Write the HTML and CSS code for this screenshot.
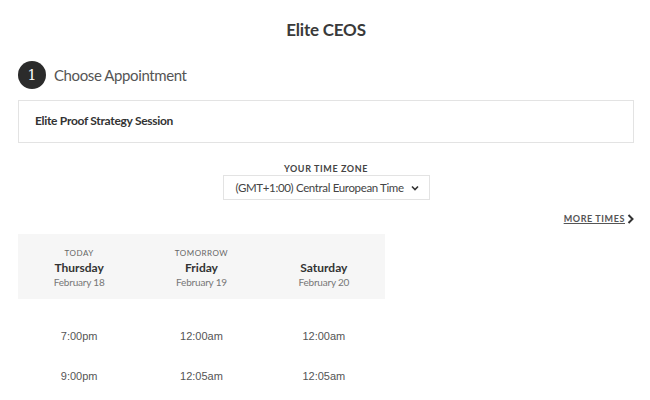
FILE: index.html
```html
<!DOCTYPE html>
<html lang="en">
<head>
    <meta charset="UTF-8">
    <meta name="viewport" content="width=device-width, initial-scale=1.0">
    <title>Elite CEOS</title>
    <link rel="stylesheet" href="styles.css">
</head>
<body>
    <header>
        <h1>Elite CEOS</h1>
    </header>
    <div class="step">
        <span class="step-number">1</span>
        <span class="step-title">Choose Appointment</span>
    </div>
    <div class="appointment-box">
        <p>Elite Proof Strategy Session</p>
    </div>
    <div class="timezone">
        <label for="timezoneSelect">YOUR TIME ZONE</label>
        <div class="select-wrap">
            <span class="select-text">(GMT+1:00) Central European Time</span>
            <svg class="chevron" width="8" height="6" viewBox="0 0 8 6"><path d="M1 1.5 L4 4.5 L7 1.5" fill="none" stroke="#333" stroke-width="1.6"/></svg>
        </div>
    </div>
    <div class="more-times">
        <a href="#">MORE TIMES</a>
        <svg width="7" height="10" viewBox="0 0 7 10"><path d="M1.5 1 L5.5 5 L1.5 9" fill="none" stroke="#333" stroke-width="2"/></svg>
    </div>
    <div class="calendar">
        <div class="day-header">
            <div class="day">
                <span class="day-label">TODAY</span>
                <span class="day-name">Thursday</span>
                <span class="day-date">February 18</span>
            </div>
            <div class="day">
                <span class="day-label">TOMORROW</span>
                <span class="day-name">Friday</span>
                <span class="day-date">February 19</span>
            </div>
            <div class="day">
                <span class="day-label">&nbsp;</span>
                <span class="day-name">Saturday</span>
                <span class="day-date">February 20</span>
            </div>
        </div>
        <div class="time-grid">
            <a href="#">7:00pm</a>
            <a href="#">12:00am</a>
            <a href="#">12:00am</a>
            <a href="#">9:00pm</a>
            <a href="#">12:05am</a>
            <a href="#">12:05am</a>
        </div>
    </div>
</body>
</html>
```

FILE: styles.css
```css
* {
    margin: 0;
    padding: 0;
    box-sizing: border-box;
}
body {
    font-family: Lato, "Open Sans", sans-serif;
    background: white;
    color: #333;
    padding: 0 16px 0 18px;
}
header {
    text-align: center;
    padding-top: 19px;
    height: 60px;
}
h1 {
    font-size: 17px;
    font-weight: 700;
    letter-spacing: -0.2px;
    color: #3a3a3a;
}
.step {
    display: flex;
    align-items: center;
    gap: 8px;
    height: 30px;
}
.step-number {
    width: 28px;
    height: 28px;
    border-radius: 50%;
    background: #2b2b2b;
    color: white;
    font-family: "DejaVu Serif", "Liberation Serif", serif;
    font-size: 14px;
    display: flex;
    align-items: center;
    justify-content: center;
}
.step-title {
    font-size: 15px;
    letter-spacing: -0.4px;
    color: #555;
}
.appointment-box {
    margin-top: 10px;
    border: 1px solid #e3e3e3;
    height: 43px;
    padding: 0 16px;
    display: flex;
    align-items: center;
}
.appointment-box p {
    font-size: 12px;
    font-weight: 700;
    letter-spacing: -0.3px;
    color: #333;
    margin-top: -3px;
}
.timezone {
    margin-top: 20px;
    display: flex;
    flex-direction: column;
    align-items: center;
}
.timezone label {
    font-size: 9px;
    font-weight: 700;
    letter-spacing: 0.6px;
    color: #444;
    margin-bottom: 1px;
}
.select-wrap {
    width: 207px;
    height: 25px;
    border: 1px solid #e3e3e3;
    display: flex;
    align-items: center;
    justify-content: space-between;
    padding: 0 10px 0 12px;
}
.select-text {
    font-size: 11.5px;
    letter-spacing: -0.35px;
    white-space: nowrap;
    color: #444;
}
.more-times {
    margin-top: 13px;
    display: flex;
    justify-content: flex-end;
    align-items: center;
    gap: 2px;
}
.more-times a {
    font-size: 9px;
    font-weight: 700;
    letter-spacing: 0.6px;
    color: #555;
}
.calendar {
    margin-top: 10px;
    width: 367px;
}
.day-header {
    background: #f6f6f6;
    height: 65px;
    display: grid;
    grid-template-columns: repeat(3, 1fr);
    padding-top: 14px;
}
.day {
    display: flex;
    flex-direction: column;
    align-items: center;
}
.day-label {
    font-size: 8px;
    letter-spacing: 0.5px;
    color: #666;
    height: 11px;
}
.day-name {
    font-size: 12px;
    font-weight: 700;
    color: #333;
    margin-top: 1px;
}
.day-date {
    font-size: 10px;
    letter-spacing: -0.2px;
    color: #777;
    margin-top: 1px;
}
.time-grid {
    display: grid;
    grid-template-columns: repeat(3, 1fr);
    row-gap: 28px;
    padding-top: 31px;
    text-align: center;
}
.time-grid a {
    font-family: "Liberation Sans", Arial, sans-serif;
    font-size: 11px;
    color: #555;
    text-decoration: none;
}
```
